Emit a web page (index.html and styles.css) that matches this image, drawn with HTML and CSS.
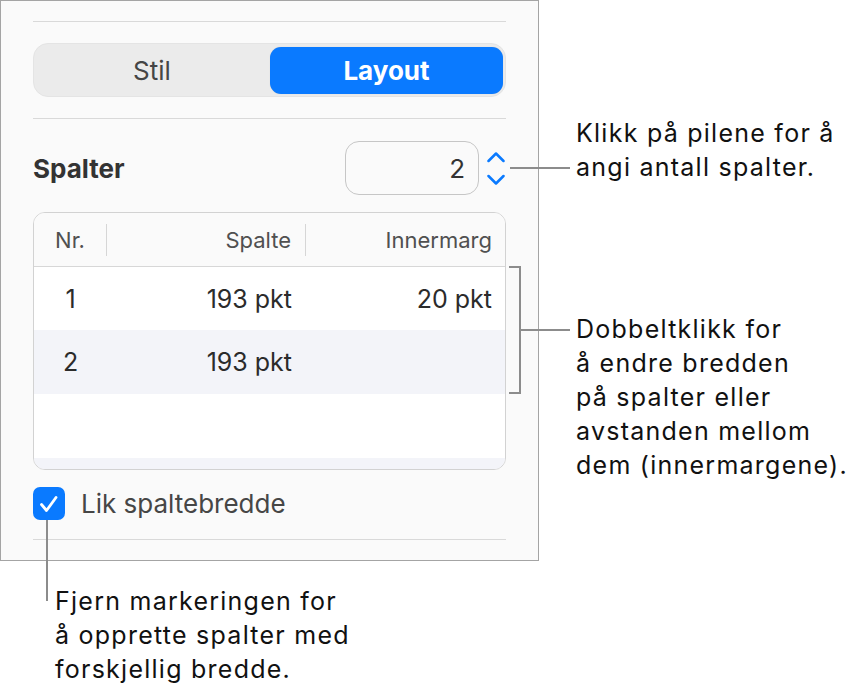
FILE: index.html
```html
<!DOCTYPE html>
<html lang="no">
<head>
<meta charset="utf-8">
<link rel="stylesheet" href="styles.css">
</head>
<body>
<div class="page">
  <div class="panel">
    <div class="sep first"></div>
    <div class="segmented">
      <div class="seg">Stil</div>
      <div class="seg active">Layout</div>
    </div>
    <div class="sep"></div>
    <div class="cols-row">
      <span class="label">Spalter</span>
      <div class="field">2</div>
      <svg class="stepper" width="18" height="36" viewBox="0 0 18 36">
        <polyline points="1.5,10 9,2.5 16.5,10" fill="none" stroke="#0a7aff" stroke-width="2.5" stroke-linecap="round" stroke-linejoin="round"/>
        <polyline points="1.5,25 9,32.5 16.5,25" fill="none" stroke="#0a7aff" stroke-width="2.5" stroke-linecap="round" stroke-linejoin="round"/>
      </svg>
    </div>
    <div class="table">
      <div class="thead">
        <div class="th c1">Nr.</div>
        <div class="th c2">Spalte</div>
        <div class="th c3">Innermarg</div>
      </div>
      <div class="tr">
        <div class="td c1">1</div>
        <div class="td c2">193 pkt</div>
        <div class="td c3">20 pkt</div>
      </div>
      <div class="tr alt">
        <div class="td c1">2</div>
        <div class="td c2">193 pkt</div>
        <div class="td c3"></div>
      </div>
      <div class="tr"></div>
      <div class="tr alt"></div>
    </div>
    <div class="check">
      <span class="box">
        <svg width="24" height="24" viewBox="0 0 24 24"><polyline points="4.5,12.5 9.5,18.5 19,5.5" fill="none" stroke="#fff" stroke-width="2.8" stroke-linecap="round" stroke-linejoin="round"/></svg>
      </span>
      <span class="check-label">Lik spaltebredde</span>
    </div>
    <div class="sep last"></div>
  </div>

  <div class="line h-step"></div>
  <div class="callout c-step">Klikk på pilene for å<br>angi antall spalter.</div>

  <div class="bracket"></div>
  <div class="line h-bracket"></div>
  <div class="callout c-table">Dobbeltklikk for<br>å endre bredden<br>på spalter eller<br>avstanden mellom<br>dem (innermargene).</div>

  <div class="line v-check"></div>
  <div class="callout c-check">Fjern markeringen for<br>å opprette spalter med<br>forskjellig bredde.</div>
</div>
</body>
</html>
```

FILE: styles.css
```css
* { box-sizing: border-box; }
html, body { margin: 0; padding: 0; background: #ffffff; }
body { font-family: "Inter", "Roboto", "Liberation Sans", sans-serif; }

.page {
  position: relative;
  width: 859px;
  height: 694px;
}

.panel {
  width: 539px;
  height: 561px;
  background: #fafafa;
  border: 1px solid #a4a4a4;
  padding: 0 32px 0 32px;
  display: flex;
  flex-direction: column;
}

.sep {
  height: 1px;
  background: #d9d9d9;
  margin-top: 21px;
}
.sep.first { margin-top: 20px; }
.sep.last { margin-top: 19px; }

.segmented {
  margin-top: 21px;
  height: 54px;
  background: #ebebeb;
  border: 1px solid #e4e4e4;
  border-radius: 15px;
  display: grid;
  grid-template-columns: 1fr 233px;
  padding: 3px 2px 2px 0;
}
.seg {
  display: flex;
  align-items: center;
  justify-content: center;
  font-size: 26px;
  color: #454545;
}
.seg.active {
  background: #0a7aff;
  color: #ffffff;
  font-weight: 700;
  border-radius: 11px;
  box-shadow: 0 0 1px rgba(0,0,0,0.15);
}

.cols-row {
  margin-top: 22px;
  height: 54px;
  display: flex;
  align-items: center;
}
.label {
  font-size: 26px;
  font-weight: 700;
  color: #333333;
  flex: 1;
}
.field {
  width: 134px;
  height: 54px;
  border: 1px solid #c6c6c6;
  border-radius: 14px;
  background: #fafafa;
  font-size: 26px;
  color: #333333;
  display: flex;
  align-items: center;
  justify-content: flex-end;
  padding-right: 13px;
}
.stepper {
  margin-left: 8px;
  margin-right: 1px;
  margin-top: 2px;
  display: block;
}

.table {
  margin-top: 17px;
  height: 258px;
  border: 1px solid #d2d2d2;
  border-radius: 12px;
  overflow: hidden;
  background: #ffffff;
}
.thead {
  height: 54px;
  display: grid;
  grid-template-columns: 73px 199px 1fr;
  background: #fafafa;
  border-bottom: 1px solid #d7d7d7;
  align-items: center;
}
.th {
  font-size: 22px;
  color: #505050;
  height: 32px;
  display: flex;
  align-items: center;
}
.th.c1 { justify-content: center; border-right: 1px solid #d6d6d6; }
.th.c2 { justify-content: flex-end; padding-right: 14px; border-right: 1px solid #d6d6d6; }
.th.c3 { justify-content: flex-end; padding-right: 13px; }

.tr {
  height: 64px;
  display: grid;
  grid-template-columns: 73px 199px 1fr;
  align-items: center;
  background: #ffffff;
}
.tr:nth-child(2) { height: 63px; }
.tr.alt { background: #f3f4f9; }
.td {
  font-size: 25px;
  color: #2b2b2b;
}
.td.c1 { text-align: center; }
.td.c2 { text-align: right; padding-right: 14px; }
.td.c3 { text-align: right; padding-right: 13px; }

.check {
  margin-top: 17px;
  height: 33px;
  display: flex;
  align-items: center;
}
.box {
  width: 32px;
  height: 33px;
  background: #0a7aff;
  border-radius: 7px;
  display: flex;
  align-items: center;
  justify-content: center;
}
.box svg { display: block; }
.check-label {
  margin-left: 16px;
  font-size: 26px;
  color: #464646;
}

.line {
  position: absolute;
  background: #8c8c8c;
}
.h-step { left: 510px; top: 167px; width: 60px; height: 2px; }
.h-bracket { left: 519px; top: 329px; width: 51px; height: 2px; }
.v-check { left: 46px; top: 520px; width: 2px; height: 81px; }

.bracket {
  position: absolute;
  left: 509px;
  top: 266px;
  width: 12px;
  height: 128px;
  border: 2px solid #8c8c8c;
  border-left: none;
}

.callout {
  position: absolute;
  font-size: 25px;
  letter-spacing: 1.25px;
  line-height: 34px;
  color: #111111;
  white-space: nowrap;
}
.c-step { left: 576px; top: 116px; }
.c-table { left: 576px; top: 312px; }
.c-check { left: 55px; top: 584px; }
```
